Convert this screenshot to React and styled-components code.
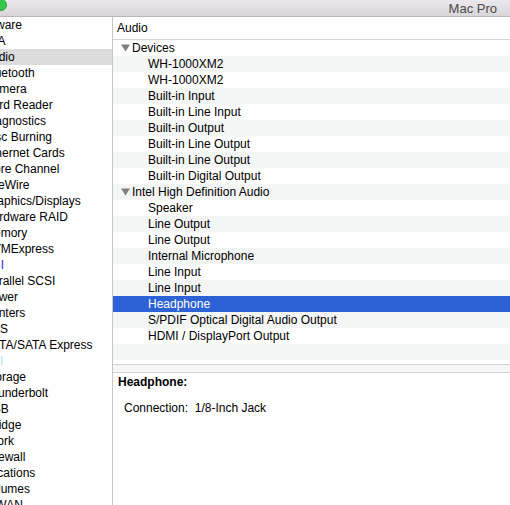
import React from 'react';
import styled, { createGlobalStyle } from 'styled-components';

const GlobalStyle = createGlobalStyle`
	html,
	body {
		margin: 0;
		padding: 0;
		background: #fff;
		overflow: hidden;
	}
	body {
		font-family: 'Liberation Sans', Arial, sans-serif;
		font-size: 12px;
		color: #000;
	}
`;

// the window sits partly off the left edge of the screen
const Window = styled.div`
	width: 563px;
	height: 505px;
	margin-left: -53px;
	display: flex;
	flex-direction: column;
	background: #fff;
`;

const TitleBar = styled.header`
	flex: none;
	height: 16px;
	display: flex;
	align-items: center;
	padding: 0 13px 0 8px;
	background: linear-gradient(#ebe9eb, #d8d6d8);
	border-bottom: 1px solid #b9b7b9;
`;

const Lights = styled.div`
	align-self: flex-start;
	margin-top: -1px;
	display: flex;
	gap: 8px;
`;

const Light = styled.span`
	width: 12px;
	height: 12px;
	border-radius: 50%;
	box-sizing: border-box;
	background: ${(p) => p.$color};
	border: 0.5px solid ${(p) => p.$edge};
`;

const Title = styled.div`
	margin-left: auto;
	font-size: 13px;
	line-height: 16px;
	padding-top: 1px;
	color: #4b4b4b;
`;

const Body = styled.div`
	flex: 1;
	display: flex;
	min-height: 0;
`;

const Sidebar = styled.nav`
	flex: none;
	width: 165px;
	border-right: 1px solid #c6c6c6;
	overflow: hidden;
`;

const SideItem = styled.div`
	height: 16px;
	line-height: 16px;
	white-space: nowrap;
	padding-left: ${(p) => (p.$header ? 23 : 37)}px;
	background: ${(p) => (p.$selected ? '#dcdcdc' : 'transparent')};
	color: ${(p) => p.$tint || '#000'};
`;

const Main = styled.section`
	flex: 1;
	display: flex;
	flex-direction: column;
	min-width: 0;
`;

const PaneHeader = styled.div`
	height: 22px;
	line-height: 22px;
	padding-left: 4px;
	border-bottom: 1px solid #d6d6d6;
`;

const ListArea = styled.div`
	height: 324px;
	border-bottom: 1px solid #d4d4d4;
`;

const Row = styled.div`
	height: 16px;
	line-height: 16px;
	display: flex;
	align-items: center;
	white-space: nowrap;
	padding-left: ${(p) => (p.$group ? 8 : 35)}px;
	background: ${(p) => (p.$selected ? '#2d62d6' : p.$odd ? '#f4f5f5' : '#fff')};
	color: ${(p) => (p.$selected ? '#fff' : '#000')};
`;

const Disclosure = styled.svg`
	width: 9px;
	height: 8px;
	margin-right: 2px;
	fill: #808080;
`;

const Splitter = styled.div`
	height: 7px;
	background: #f6f6f6;
	border-bottom: 1px solid #d4d4d4;
`;

const Detail = styled.div`
	padding: 1px 5px;
`;

const DetailTitle = styled.div`
	font-weight: bold;
	line-height: 16px;
`;

const DetailLine = styled.div`
	margin-top: 10px;
	padding-left: 6px;
	line-height: 16px;
	white-space: pre;
`;

const sideItems = [
	{ label: 'Hardware', header: true },
	{ label: 'ATA' },
	{ label: 'Audio', selected: true },
	{ label: 'Bluetooth' },
	{ label: 'Camera' },
	{ label: 'Card Reader' },
	{ label: 'Diagnostics' },
	{ label: 'Disc Burning' },
	{ label: 'Ethernet Cards' },
	{ label: 'Fibre Channel' },
	{ label: 'FireWire' },
	{ label: 'Graphics/Displays' },
	{ label: 'Hardware RAID' },
	{ label: 'Memory' },
	{ label: 'NVMExpress' },
	{ label: 'PCI', tint: '#1c2fd0' },
	{ label: 'Parallel SCSI' },
	{ label: 'Power' },
	{ label: 'Printers' },
	{ label: 'SAS' },
	{ label: 'SATA/SATA Express' },
	{ label: 'SPI', tint: '#b9dcff' },
	{ label: 'Storage' },
	{ label: 'Thunderbolt' },
	{ label: 'USB' },
	{ label: 'iBridge' },
	{ label: 'Network', header: true },
	{ label: 'Firewall' },
	{ label: 'Locations' },
	{ label: 'Volumes' },
	{ label: 'WWAN' },
	{ label: 'Wi-Fi' },
];

const rows = [
	{ label: 'Devices', group: true },
	{ label: 'WH-1000XM2' },
	{ label: 'WH-1000XM2' },
	{ label: 'Built-in Input' },
	{ label: 'Built-in Line Input' },
	{ label: 'Built-in Output' },
	{ label: 'Built-in Line Output' },
	{ label: 'Built-in Line Output' },
	{ label: 'Built-in Digital Output' },
	{ label: 'Intel High Definition Audio', group: true },
	{ label: 'Speaker' },
	{ label: 'Line Output' },
	{ label: 'Line Output' },
	{ label: 'Internal Microphone' },
	{ label: 'Line Input' },
	{ label: 'Line Input' },
	{ label: 'Headphone', selected: true },
	{ label: 'S/PDIF Optical Digital Audio Output' },
	{ label: 'HDMI / DisplayPort Output' },
	{ label: '' },
];

export default function App() {
	return (
		<>
			<GlobalStyle />
			<Window>
				<TitleBar>
					<Lights>
						<Light $color="#fc605b" $edge="#de4a45" />
						<Light $color="#fdbc40" $edge="#dea236" />
						<Light $color="#34c84a" $edge="#27aa35" />
					</Lights>
					<Title>Mac Pro</Title>
				</TitleBar>
				<Body>
					<Sidebar>
						{sideItems.map((item, i) => (
							<SideItem
								key={i}
								$header={item.header}
								$selected={item.selected}
								$tint={item.tint}
							>
								{item.label}
							</SideItem>
						))}
					</Sidebar>
					<Main>
						<PaneHeader>Audio</PaneHeader>
						<ListArea>
							{rows.map((row, i) => (
								<Row key={i} $odd={i % 2 === 1} $group={row.group} $selected={row.selected}>
									{row.group && (
										<Disclosure viewBox="0 0 9 8">
											<polygon points="0,0.5 9,0.5 4.5,7.5" />
										</Disclosure>
									)}
									{row.label}
								</Row>
							))}
						</ListArea>
						<Splitter />
						<Detail>
							<DetailTitle>Headphone:</DetailTitle>
							<DetailLine>{'Connection:  1/8-Inch Jack'}</DetailLine>
						</Detail>
					</Main>
				</Body>
			</Window>
		</>
	);
}
